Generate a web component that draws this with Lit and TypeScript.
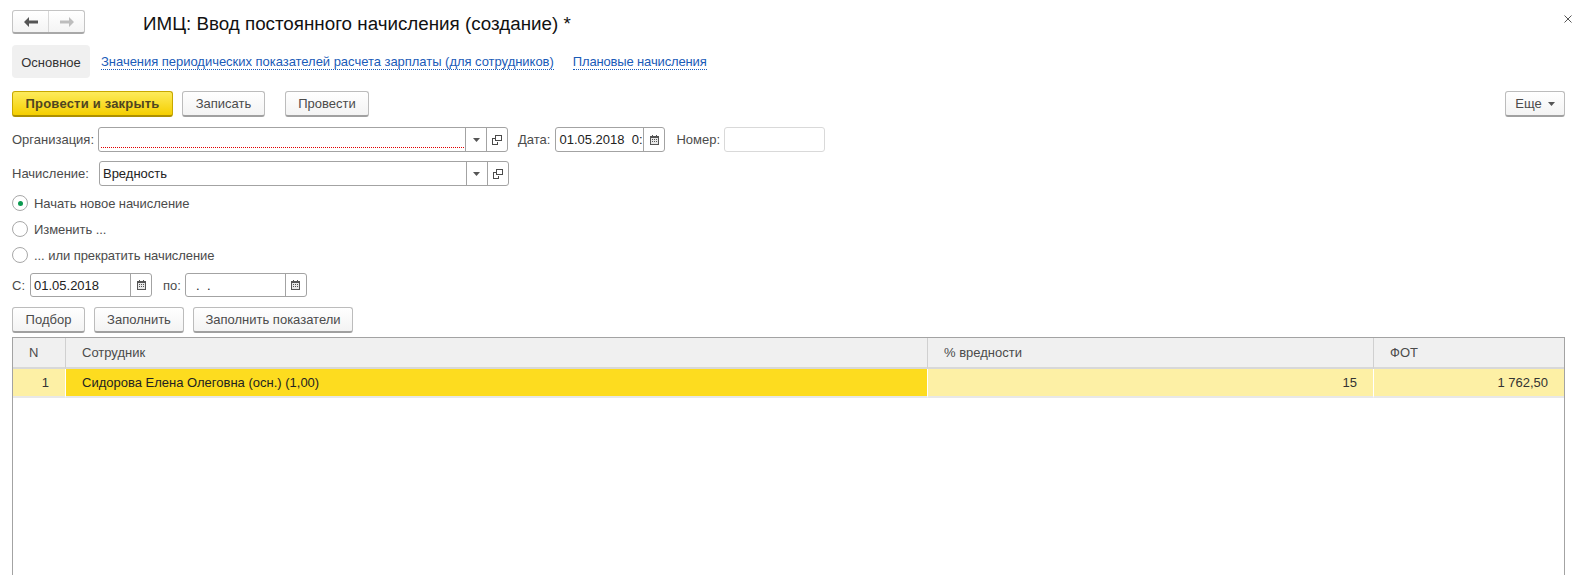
import { LitElement, html, css } from "lit";
import { customElement } from "lit/decorators.js";

const caret = html`<svg width="7" height="4" viewBox="0 0 7 4"><path d="M0 0h7L3.5 4z" fill="#555"/></svg>`;
const openIcon = html`<svg width="10" height="10" viewBox="0 0 10 10" fill="none" stroke="#4a4a4a" shape-rendering="crispEdges"><path d="M3.5 .5h6v5h-6z"/><path d="M3.5 3.5h-3v6h5v-3"/></svg>`;
const calIcon = html`<svg width="9" height="10" viewBox="0 0 9 10" shape-rendering="crispEdges"><path d="M0 1h9v9H0z" fill="#555"/><path d="M2 0h1v2H2zM6 0h1v2H6z" fill="#555"/><path d="M1 3h7v6H1z" fill="#e8e8e8"/><path d="M2 4h1v1H2zM4 4h1v1H4zM6 4h1v1H6zM2 6h1v1H2zM4 6h1v1H4zM6 6h1v1H6z" fill="#555"/></svg>`;

@customElement("app-root")
export class AppRoot extends LitElement {
  static styles = css`
    :host { display: block; width: 1581px; height: 575px; overflow: hidden; background: #fff; font: 13px "Liberation Sans", Arial, sans-serif; color: #4b4b4b; }
    .page { display: flex; flex-direction: column; height: 575px; padding: 0 16px 0 12px; box-sizing: border-box; position: relative; }
    .head { display: flex; align-items: center; height: 24px; margin-top: 10px; }
    .nav { display: flex; width: 73px; height: 24px; box-sizing: border-box; border: 1px solid #c4c4c4; border-bottom: 2px solid #a8a8a8; border-radius: 3px; background: linear-gradient(#fff, #f4f4f4); }
    .nav span { flex: 1; display: flex; align-items: center; justify-content: center; }
    .nav span + span { border-left: 1px solid #d8d8d8; }
    .title { margin-left: 58px; padding-top: 3px; font-size: 18.8px; color: #111; white-space: nowrap; }
    .close { position: absolute; top: 15px; right: 9px; width: 8px; height: 8px; }
    .tabs { display: flex; align-items: center; height: 33px; margin-top: 11px; }
    .tab { display: flex; align-items: center; justify-content: center; width: 78px; height: 33px; padding-top: 2px; box-sizing: border-box; background: #f0f0f0; border-radius: 4px; color: #333; }
    .link { color: #1a5bb8; border-bottom: 1px dotted #1a5bb8; line-height: 14px; margin-top: 2px; }
    .link.a { margin-left: 11px; letter-spacing: -.03px; }
    .link.b { margin-left: 19px; letter-spacing: -.15px; }
    .toolbar { display: flex; margin-top: 13px; }
    .btn { display: flex; align-items: center; justify-content: center; box-sizing: border-box; height: 26px; border: 1px solid #bcbcbc; border-bottom: 2px solid #a0a0a0; border-radius: 3px; background: linear-gradient(#fff, #f3f3f3); color: #4b4b4b; }
    .btn.primary { background: linear-gradient(#fdeb5c, #f5cf00); border-color: #c8a800; border-bottom-color: #ad9000; font-weight: bold; color: #4f4520; width: 161px; letter-spacing: .2px; }
    .w81 { width: 83px; margin-left: 9px; }
    .w83 { width: 84px; margin-left: 20px; }
    .more { margin-left: auto; width: 60px; gap: 6px; }
    .row { display: flex; align-items: center; height: 25px; }
    .row.r1 { margin-top: 10px; }
    .row.r2 { margin-top: 9px; }
    .lbl { white-space: nowrap; }
    .field { display: flex; box-sizing: border-box; height: 100%; border: 1px solid #a3a3a3; border-radius: 3px; background: #fff; color: #222; }
    .val { flex: 1; display: flex; align-items: center; padding: 0 3px; min-width: 0; position: relative; overflow: hidden; white-space: nowrap; }
    .err { position: absolute; left: 2px; right: 1px; bottom: 3px; border-bottom: 1px dotted #e00000; }
    .cell { display: flex; align-items: center; justify-content: center; border-left: 1px solid #a3a3a3; }
    .c20 { width: 20px; }
    .org { width: 410px; margin-left: 4px; }
    .org2 { width: 410px; margin-left: 10px; }
    .date { width: 110px; margin-left: 5px; }
    .num { width: 101px; margin-left: 4px; border-color: #d9d9d9; }
    .ml-date { margin-left: 10px; }
    .ml-num { margin-left: 11px; }
    .radios { display: flex; flex-direction: column; margin-top: 4px; letter-spacing: -.06px; }
    .radio { display: flex; align-items: center; height: 26px; }
    .circle { display: flex; align-items: center; justify-content: center; box-sizing: border-box; width: 16px; height: 16px; border: 1px solid #a8a8a8; border-radius: 50%; margin-right: 6px; }
    .dot { width: 5px; height: 5px; border-radius: 50%; background: #0b9a50; }
    .dates { display: flex; align-items: center; height: 24px; margin-top: 5px; }
    .d1 { width: 122px; margin-left: 5px; }
    .d2 { width: 122px; margin-left: 4px; }
    .ml-po { margin-left: 11px; }
    .tb2 { display: flex; margin-top: 10px; }
    .w72 { width: 73px; }
    .w89 { width: 90px; margin-left: 9px; }
    .w159 { width: 160px; margin-left: 9px; }
    .table { flex: 1; margin-top: 4px; border: 1px solid #a3a3a3; border-bottom: none; display: grid; grid-template-columns: 52px 862px 446px 1fr; grid-auto-rows: min-content; align-content: start; }
    .th { height: 29px; display: flex; align-items: center; padding-left: 16px; background: #f0f0f0; border-left: 1px solid #d0d0d0; border-bottom: 2px solid #d8d8d8; color: #4b4b4b; box-sizing: content-box; }
    .th:first-child { border-left: none; padding-left: 16px; }
    .td { height: 27px; display: flex; align-items: center; background: #fdf0a5; border-left: 1px solid #fff; border-bottom: 2px solid #e8e8e8; color: #333; }
    .td:nth-child(5) { border-left: none; justify-content: flex-end; padding-right: 14px; }
    .td.cur { background: #fddc1f; padding-left: 16px; color: #222; }
    .td.num-c { justify-content: flex-end; padding-right: 16px; }
  `;

  render() {
    return html`<div class="page">
      <div class="head">
        <div class="nav">
          <span><svg width="14" height="10" viewBox="0 0 14 10"><path d="M0 5l5-5v3.5h9v3H5V10z" fill="#555"/></svg></span>
          <span><svg width="14" height="10" viewBox="0 0 14 10"><path d="M14 5L9 0v3.5H0v3h9V10z" fill="#bdbdbd"/></svg></span>
        </div>
        <div class="title">ИМЦ: Ввод постоянного начисления (создание) *</div>
      </div>
      <svg class="close" viewBox="0 0 8 8"><path d="M.5.5l7 7M7.5.5l-7 7" stroke="#555" fill="none"/></svg>
      <div class="tabs">
        <div class="tab">Основное</div>
        <span class="link a">Значения периодических показателей расчета зарплаты (для сотрудников)</span>
        <span class="link b">Плановые начисления</span>
      </div>
      <div class="toolbar">
        <div class="btn primary">Провести и закрыть</div>
        <div class="btn w81">Записать</div>
        <div class="btn w83">Провести</div>
        <div class="btn more">Еще ${caret}</div>
      </div>
      <div class="row r1">
        <span class="lbl">Организация:</span>
        <div class="field org">
          <div class="val"><div class="err"></div></div>
          <div class="cell c20">${caret}</div><div class="cell c20">${openIcon}</div>
        </div>
        <span class="lbl ml-date">Дата:</span>
        <div class="field date"><div class="val">01.05.2018&nbsp;&nbsp;0:</div><div class="cell c20">${calIcon}</div></div>
        <span class="lbl ml-num">Номер:</span>
        <div class="field num"></div>
      </div>
      <div class="row r2">
        <span class="lbl">Начисление:</span>
        <div class="field org2">
          <div class="val">Вредность</div>
          <div class="cell c20">${caret}</div><div class="cell c20">${openIcon}</div>
        </div>
      </div>
      <div class="radios">
        <div class="radio"><span class="circle"><span class="dot"></span></span>Начать новое начисление</div>
        <div class="radio"><span class="circle"></span>Изменить ...</div>
        <div class="radio"><span class="circle"></span>... или прекратить начисление</div>
      </div>
      <div class="dates">
        <span class="lbl">С:</span>
        <div class="field d1"><div class="val">01.05.2018</div><div class="cell c20">${calIcon}</div></div>
        <span class="lbl ml-po">по:</span>
        <div class="field d2"><div class="val">&nbsp;&nbsp;.&nbsp;&nbsp;.</div><div class="cell c20">${calIcon}</div></div>
      </div>
      <div class="tb2">
        <div class="btn w72">Подбор</div>
        <div class="btn w89">Заполнить</div>
        <div class="btn w159">Заполнить показатели</div>
      </div>
      <div class="table">
        <div class="th">N</div><div class="th">Сотрудник</div><div class="th">% вредности</div><div class="th">ФОТ</div>
        <div class="td num-c">1</div>
        <div class="td cur">Сидорова Елена Олеговна (осн.) (1,00)</div>
        <div class="td num-c">15</div>
        <div class="td num-c">1 762,50</div>
      </div>
    </div>`;
  }
}
